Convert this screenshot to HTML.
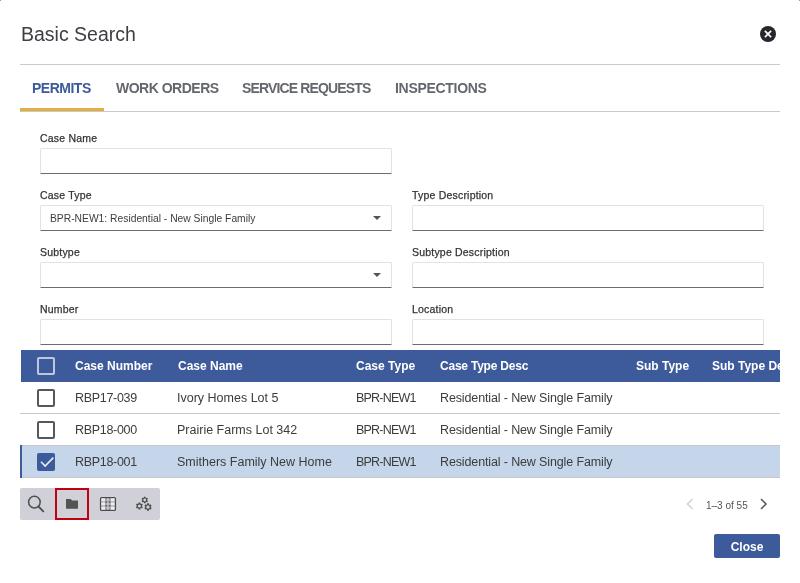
<!DOCTYPE html>
<html>
<head>
<meta charset="utf-8">
<style>
html,body{margin:0;padding:0;background:#fff;}
body{width:800px;height:583px;position:relative;overflow:hidden;font-family:"Liberation Sans",sans-serif;color:#3c3c3c;}
.a{position:absolute;white-space:nowrap;will-change:transform;}
.title{left:21px;top:22px;font-size:19.5px;color:#3b3e43;line-height:24px;}
.closex{left:760px;top:26px;width:16px;height:16px;}
.hr1{left:20px;top:64px;width:760px;height:1px;background:#cacaca;}
.tab{top:80px;font-size:14px;font-weight:700;line-height:16px;color:#64676d;}
.tab.act{color:#3d5a9c;}
.ul{left:20px;top:108px;width:84px;height:3px;background:#e3ae45;}
.hr2{left:20px;top:111px;width:760px;height:1px;background:#c9c9c9;}
.lbl{font-size:10.5px;line-height:12px;color:#333;letter-spacing:0.2px;-webkit-text-stroke:0.25px #333;}
.inp{box-sizing:border-box;width:352px;height:26px;border:1px solid #e2e2e2;border-bottom:1px solid #696c73;border-radius:2px 2px 0 0;background:#fff;}
.seltxt{font-size:10.3px;line-height:12px;color:#3c3c3c;}
.arrow{width:0;height:0;border-left:4px solid transparent;border-right:4px solid transparent;border-top:4px solid #555;}
.thead{left:21px;top:350px;width:759px;height:32px;background:#3d5a9b;overflow:hidden;}
.th{top:9px;font-size:12px;font-weight:700;color:#fff;line-height:14px;}
.row{left:20px;width:760px;height:31px;border-bottom:1px solid #c7c7c7;}
.row.sel{background:#c5d5ea;}
.td{font-size:12.5px;line-height:14px;color:#3c3c3c;}
.cb{box-sizing:border-box;width:18px;height:18px;border:2px solid #55595e;border-radius:2px;}
.tb{left:20px;top:488px;width:140px;height:32px;background:#cfd0d8;border-radius:2px;}
.redbox{left:55px;top:488px;width:34px;height:32px;box-sizing:border-box;border:2px solid #c0000b;}
.pg{left:706px;top:500px;font-size:10px;line-height:12px;color:#555;}
.btn{left:714px;top:534px;width:66px;height:24px;background:#3d5a9b;border-radius:2px;color:#fff;font-size:12px;font-weight:700;text-align:center;line-height:26px;}
</style>
</head>
<body>
<div class="a" style="left:0;top:0;width:1px;height:1px;background:#9a9a9a"></div>
<div class="a" style="left:799px;top:0;width:1px;height:1px;background:#9a9a9a"></div>

<div class="a title">Basic Search</div>
<svg class="a closex" viewBox="0 0 16 16"><circle cx="8" cy="8" r="8" fill="#24272c"/><path d="M4.9 4.9L11.1 11.1M11.1 4.9L4.9 11.1" stroke="#fff" stroke-width="1.7" stroke-linecap="butt"/></svg>
<div class="a hr1"></div>

<div class="a tab act" style="left:32.4px;letter-spacing:-0.5px">PERMITS</div>
<div class="a tab" style="left:116px;letter-spacing:-0.5px">WORK ORDERS</div>
<div class="a tab" style="left:242px;letter-spacing:-0.85px">SERVICE REQUESTS</div>
<div class="a tab" style="left:394.6px;letter-spacing:-0.3px">INSPECTIONS</div>
<div class="a hr2"></div>
<div class="a ul"></div>

<div class="a lbl" style="left:40px;top:131.5px">Case Name</div>
<div class="a inp" style="left:40px;top:148px"></div>

<div class="a lbl" style="left:40px;top:188.5px">Case Type</div>
<div class="a inp" style="left:40px;top:205px"></div>
<div class="a seltxt" style="left:49.6px;top:212.6px">BPR-NEW1: Residential - New Single Family</div>
<div class="a arrow" style="left:373px;top:216px"></div>
<div class="a lbl" style="left:412px;top:188.5px">Type Description</div>
<div class="a inp" style="left:412px;top:205px"></div>

<div class="a lbl" style="left:40px;top:245.5px">Subtype</div>
<div class="a inp" style="left:40px;top:262px"></div>
<div class="a arrow" style="left:373px;top:273px"></div>
<div class="a lbl" style="left:412px;top:245.5px">Subtype Description</div>
<div class="a inp" style="left:412px;top:262px"></div>

<div class="a lbl" style="left:40px;top:302.5px">Number</div>
<div class="a inp" style="left:40px;top:319px"></div>
<div class="a lbl" style="left:412px;top:302.5px">Location</div>
<div class="a inp" style="left:412px;top:319px"></div>

<div class="a thead">
  <div class="a cb" style="left:16px;top:7px;border-color:#bec7df"></div>
  <div class="a th" style="left:54px">Case Number</div>
  <div class="a th" style="left:157px">Case Name</div>
  <div class="a th" style="left:335px">Case Type</div>
  <div class="a th" style="left:419px;letter-spacing:-0.22px">Case Type Desc</div>
  <div class="a th" style="left:615px">Sub Type</div>
  <div class="a th" style="left:691px">Sub Type Desc</div>
</div>

<div class="a row" style="top:382px">
  <div class="a cb" style="left:17px;top:7px"></div>
  <div class="a td" style="left:55px;top:9px;letter-spacing:-0.3px">RBP17-039</div>
  <div class="a td" style="left:157px;top:9px">Ivory Homes Lot 5</div>
  <div class="a td" style="left:336px;top:9px;letter-spacing:-0.8px">BPR-NEW1</div>
  <div class="a td" style="left:420px;top:9px;letter-spacing:-0.13px">Residential - New Single Family</div>
</div>
<div class="a row" style="top:414px">
  <div class="a cb" style="left:17px;top:7px"></div>
  <div class="a td" style="left:55px;top:9px;letter-spacing:-0.3px">RBP18-000</div>
  <div class="a td" style="left:157px;top:9px">Prairie Farms Lot 342</div>
  <div class="a td" style="left:336px;top:9px;letter-spacing:-0.8px">BPR-NEW1</div>
  <div class="a td" style="left:420px;top:9px;letter-spacing:-0.13px">Residential - New Single Family</div>
</div>
<div class="a row sel" style="top:446px">
  <div class="a" style="left:0;top:-1px;width:2px;height:33px;background:#3d5a9b"></div>
  <svg class="a" style="left:17px;top:7px" width="18" height="18" viewBox="0 0 18 18"><rect x="0" y="0" width="18" height="18" rx="2" fill="#3d5a9b"/><path d="M4 8.8L8.1 13L16.3 4.6" stroke="#e9edf5" stroke-width="1.6" fill="none"/></svg>
  <div class="a td" style="left:55px;top:9px;letter-spacing:-0.3px">RBP18-001</div>
  <div class="a td" style="left:157px;top:9px">Smithers Family New Home</div>
  <div class="a td" style="left:336px;top:9px;letter-spacing:-0.8px">BPR-NEW1</div>
  <div class="a td" style="left:420px;top:9px;letter-spacing:-0.13px">Residential - New Single Family</div>
</div>

<div class="a tb"></div>
<svg class="a" style="left:20px;top:488px" width="140" height="32" viewBox="0 0 140 32">
  <circle cx="14.4" cy="14.1" r="5.8" stroke="#4f4f4f" stroke-width="1.5" fill="none"/>
  <path d="M18.6 18.6L23.3 23.3" stroke="#4f4f4f" stroke-width="1.9" stroke-linecap="round"/>
  <path d="M46 11.2Q46 11 46.2 11H50.8L52 12.4H57.8Q58 12.4 58 12.6V20.5Q58 20.7 57.8 20.7H46.2Q46 20.7 46 20.5Z" fill="#535353"/>
  <rect x="80.5" y="9.5" width="15" height="13" rx="1" fill="#a4a4a9" stroke="#4d4d4f" stroke-width="1.15"/>
  <g fill="#ededf0"><rect x="81.4" y="10.4" width="3.6" height="2.9"/><rect x="81.4" y="14.4" width="3.6" height="3"/><rect x="81.4" y="18.6" width="3.6" height="3"/><rect x="90.9" y="10.4" width="3.6" height="2.9"/><rect x="90.9" y="14.4" width="3.6" height="3"/><rect x="90.9" y="18.6" width="3.6" height="3"/></g>
  <g fill="#c4c4c8"><rect x="86.6" y="10.6" width="2.6" height="2.4"/><rect x="86.6" y="14.6" width="2.6" height="2.6"/><rect x="86.6" y="18.8" width="2.6" height="2.4"/></g>
  <g fill="#4a4a4c"><circle cx="86.2" cy="14" r="0.75"/><circle cx="89.6" cy="14" r="0.75"/><circle cx="86.2" cy="17.8" r="0.75"/><circle cx="89.6" cy="17.8" r="0.75"/></g>
  <g fill="#6a6a6e"><circle cx="86.2" cy="10.6" r="0.6"/><circle cx="89.6" cy="10.6" r="0.6"/><circle cx="86.2" cy="21.3" r="0.6"/><circle cx="89.6" cy="21.3" r="0.6"/></g>
  <g fill="#4a4a4a" fill-rule="evenodd">
  <path d="M123.87 9.77 L123.98 8.79 L125.52 8.79 L125.63 9.77 L126.24 10.12 L127.14 9.73 L127.91 11.06 L127.12 11.65 L127.12 12.35 L127.91 12.94 L127.14 14.27 L126.24 13.88 L125.63 14.23 L125.52 15.21 L123.98 15.21 L123.87 14.23 L123.26 13.88 L122.36 14.27 L121.59 12.94 L122.38 12.35 L122.38 11.65 L121.59 11.06 L122.36 9.73 L123.26 10.12Z M126.15 12.00 A1.4 1.4 0 1 0 123.35 12.00 A1.4 1.4 0 1 0 126.15 12.00Z"/>
  <path d="M118.44 15.58 L118.56 14.50 L120.24 14.50 L120.36 15.58 L121.01 15.96 L122.01 15.52 L122.85 16.98 L121.97 17.62 L121.97 18.38 L122.85 19.02 L122.01 20.48 L121.01 20.04 L120.36 20.42 L120.24 21.50 L118.56 21.50 L118.44 20.42 L117.79 20.04 L116.79 20.48 L115.95 19.02 L116.83 18.38 L116.83 17.62 L115.95 16.98 L116.79 15.52 L117.79 15.96Z M120.95 18.00 A1.55 1.55 0 1 0 117.85 18.00 A1.55 1.55 0 1 0 120.95 18.00Z"/>
  <path d="M126.97 16.40 L127.11 15.30 L128.89 15.30 L129.03 16.40 L129.74 16.81 L130.76 16.38 L131.64 17.92 L130.77 18.59 L130.77 19.41 L131.64 20.08 L130.76 21.62 L129.74 21.19 L129.03 21.60 L128.89 22.70 L127.11 22.70 L126.97 21.60 L126.26 21.19 L125.24 21.62 L124.36 20.08 L125.23 19.41 L125.23 18.59 L124.36 17.92 L125.24 16.38 L126.26 16.81Z M129.65 19.00 A1.65 1.65 0 1 0 126.35 19.00 A1.65 1.65 0 1 0 129.65 19.00Z"/>
  </g>
</svg>
<div class="a redbox"></div>

<svg class="a" style="left:684px;top:496px" width="90" height="16" viewBox="0 0 90 16">
  <path d="M8.5 3L3.5 8L8.5 13" stroke="#d2d2d2" stroke-width="1.5" fill="none"/>
  <path d="M77 3L82 8L77 13" stroke="#555" stroke-width="1.5" fill="none"/>
</svg>
<div class="a pg">1–3 of 55</div>

<div class="a btn">Close</div>
</body>
</html>
